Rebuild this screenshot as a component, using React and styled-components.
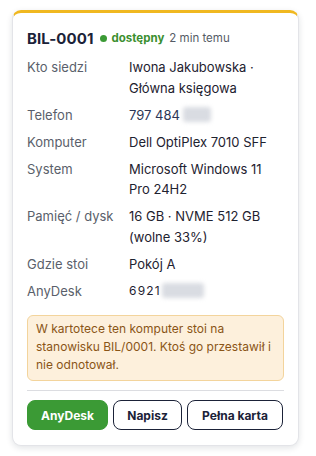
import React from "react";
import styled, { createGlobalStyle } from "styled-components";

const Global = createGlobalStyle`
  html, body { margin: 0; padding: 0; background: #ffffff; }
  body { font-family: Inter, "Noto Sans", sans-serif; -webkit-font-smoothing: antialiased; }
`;

const Page = styled.div`
  padding: 10px 18px 10px 12px;
`;

const Card = styled.div`
  width: 287px;
  box-sizing: border-box;
  background: #fff;
  border: 1px solid #e3e4e8;
  border-top: 3px solid #f0b820;
  border-radius: 9px;
  box-shadow: 0 2px 6px rgba(20, 30, 50, 0.12);
  padding: 14px 14px 15px 14px;
`;

const Header = styled.div`
  display: flex;
  align-items: center;
  gap: 6px;
  height: 22px;
  margin-bottom: 8px;
`;

const Id = styled.span`
  font-size: 15px;
  font-weight: 700;
  color: #1b2238;
  letter-spacing: 0.1px;
`;

const Dot = styled.span`
  width: 7px;
  height: 7px;
  border-radius: 50%;
  background: #3b9a35;
  margin-left: 1px;
`;

const Status = styled.span`
  font-size: 11.5px;
  font-weight: 700;
  color: #3b8f2f;
  margin-left: -2px;
`;

const Ago = styled.span`
  font-size: 11.5px;
  color: #555b66;
  margin-left: -1px;
`;

const Rows = styled.div`
  display: grid;
  grid-template-columns: 102px 1fr;
  row-gap: 6.5px;
  font-size: 13px;
  line-height: 20.5px;
`;

const Label = styled.div`
  color: #5a5f6b;
`;

const Value = styled.div`
  color: ${(p) => (p.$accent ? "#2c3656" : "#1e2230")};
  display: flex;
  align-items: center;
  flex-wrap: wrap;
`;

const Mono = styled.span`
  font-size: 12px;
  letter-spacing: 1.2px;
  font-weight: 400;
`;

const Blur = styled.span`
  display: inline-block;
  width: ${(p) => p.$w}px;
  height: 15px;
  margin-left: ${(p) => p.$ml || 3}px;
  background: #d9dce2;
  border-radius: 3px;
  filter: blur(2px);
`;

const Note = styled.div`
  margin-top: 14px;
  background: #fdf0dc;
  border: 1px solid #f3d49c;
  border-radius: 6px;
  padding: 4px 8px 6px 8px;
  font-size: 12px;
  line-height: 18px;
  color: #8a5517;
`;

const Divider = styled.hr`
  border: none;
  border-top: 1px solid #dcdde1;
  margin: 9px 0 9px 0;
`;

const Actions = styled.div`
  display: flex;
  gap: 5px;
`;

const Button = styled.button`
  flex: none;
  white-space: nowrap;
  font-family: inherit;
  font-size: 12px;
  font-weight: 700;
  height: 30px;
  width: ${(p) => p.$w}px;
  padding: 0;
  border-radius: 8px;
  cursor: pointer;
  background: ${(p) => (p.$primary ? "#3b9a35" : "#fff")};
  color: ${(p) => (p.$primary ? "#fff" : "#1b2238")};
  border: ${(p) => (p.$primary ? "1.5px solid #3b9a35" : "1.5px solid #1b2238")};
`;

export default function App() {
  return (
    <Page>
      <Global />
      <Card>
        <Header>
          <Id>BIL-0001</Id>
          <Dot />
          <Status>dostępny</Status>
          <Ago>2 min temu</Ago>
        </Header>
        <Rows>
          <Label>Kto siedzi</Label>
          <Value>Iwona Jakubowska · Główna księgowa</Value>
          <Label>Telefon</Label>
          <Value $accent>
            797 484<Blur $w={28} />
          </Value>
          <Label>Komputer</Label>
          <Value>Dell OptiPlex 7010 SFF</Value>
          <Label>System</Label>
          <Value>Microsoft Windows 11 Pro 24H2</Value>
          <Label>Pamięć / dysk</Label>
          <Value>16 GB · NVME 512 GB (wolne 33%)</Value>
          <Label>Gdzie stoi</Label>
          <Value>Pokój A</Value>
          <Label>AnyDesk</Label>
          <Value>
            <Mono>6921</Mono>
            <Blur $w={42} $ml={1} />
          </Value>
        </Rows>
        <Note>
          W kartotece ten komputer stoi na stanowisku BIL/0001. Ktoś go
          przestawił i nie odnotował.
        </Note>
        <Divider />
        <Actions>
          <Button $primary $w={81}>AnyDesk</Button>
          <Button $w={69}>Napisz</Button>
          <Button $w={96}>Pełna karta</Button>
        </Actions>
      </Card>
    </Page>
  );
}
